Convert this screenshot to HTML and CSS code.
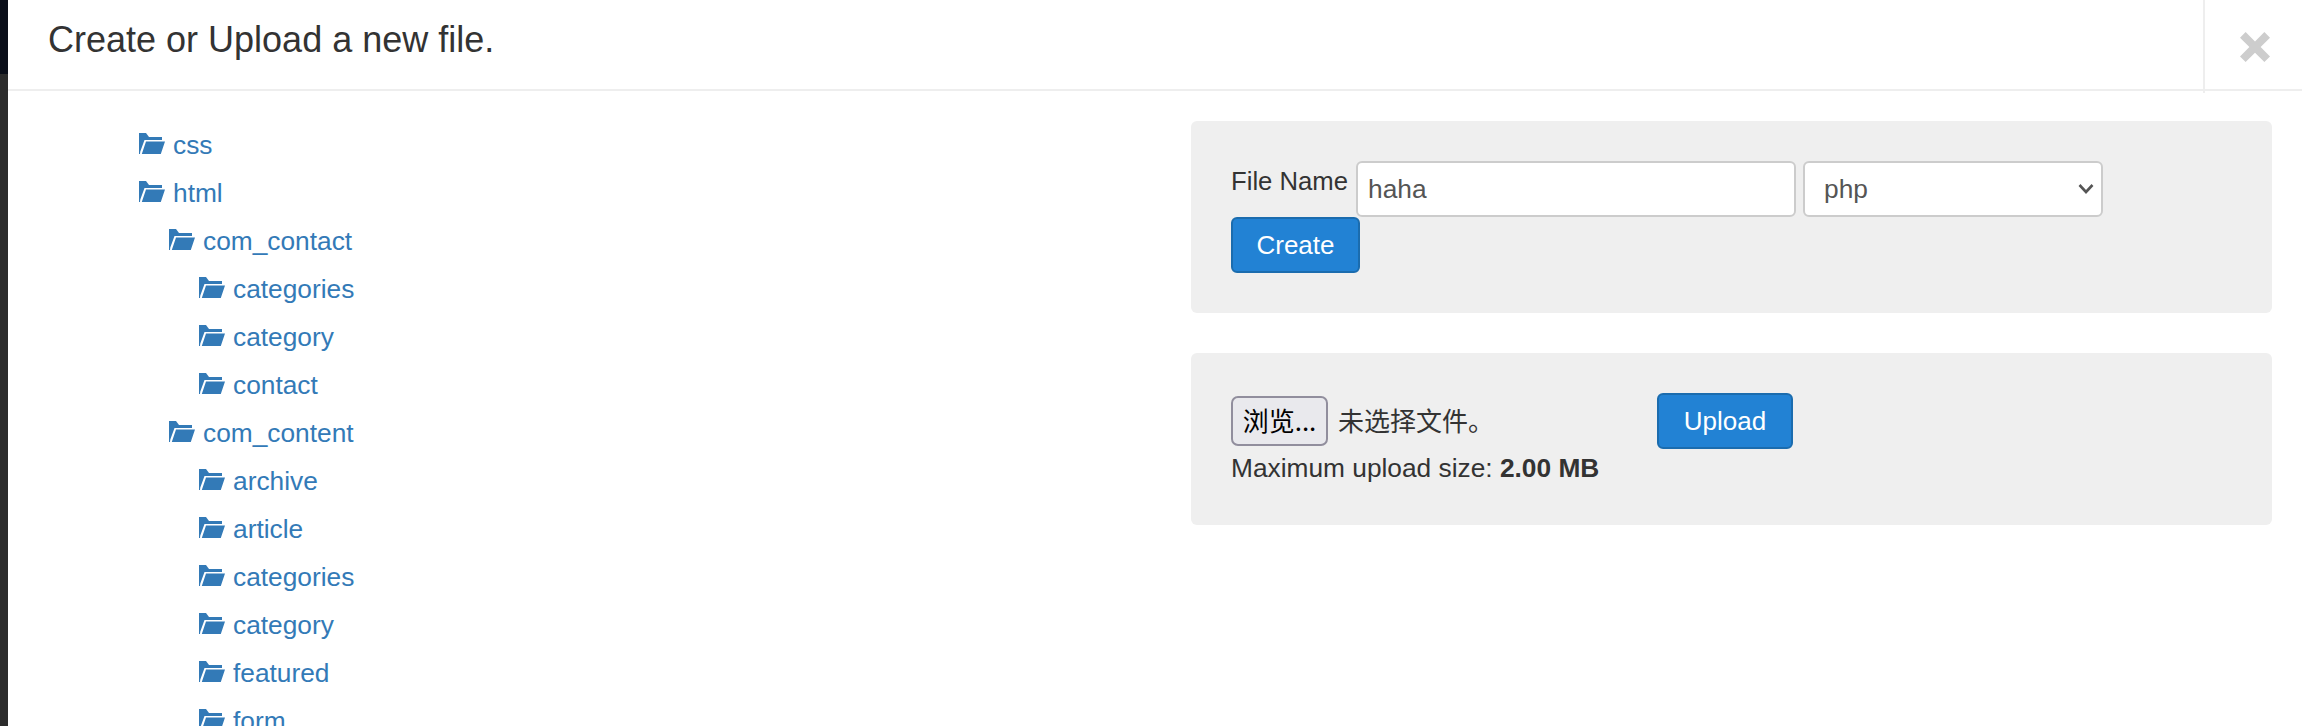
FILE: index.html
```html
<!DOCTYPE html>
<html lang="zh">
<head>
<meta charset="utf-8">
<title>Create or Upload a new file.</title>
<link rel="stylesheet" href="styles.css">
</head>
<body>
<div class="backdrop">
  <div class="strip"><div class="strip-top"></div></div>
  <div class="modal">
    <header class="modal-header">
      <h3 class="modal-title">Create or Upload a new file.</h3>
      <button class="close" type="button" aria-label="Close">
        <svg viewBox="3 3 24 24" width="30" height="30"><path d="M3 7.500 7.500 3 15 10.500 22.500 3 27 7.500 19.500 15 27 22.500 22.500 27 15 19.500 7.500 27 3 22.500 10.500 15Z" fill="#cdcdcd"/></svg>
      </button>
    </header>
    <div class="modal-body">
      <ul class="tree">
        <li><a href="#"><svg class="folder" viewBox="0 0 26 22"><path d="M0 21V0h7l3 4h13v3H5.500L1.300 18.500 1 21Z M2.800 21 7 8.600h19L21.800 21Z" fill="#337ab7"/></svg>css</a></li>
        <li><a href="#"><svg class="folder" viewBox="0 0 26 22"><path d="M0 21V0h7l3 4h13v3H5.500L1.300 18.500 1 21Z M2.800 21 7 8.600h19L21.800 21Z" fill="#337ab7"/></svg>html</a>
          <ul>
            <li><a href="#"><svg class="folder" viewBox="0 0 26 22"><path d="M0 21V0h7l3 4h13v3H5.500L1.300 18.500 1 21Z M2.800 21 7 8.600h19L21.800 21Z" fill="#337ab7"/></svg>com_contact</a>
              <ul>
                <li><a href="#"><svg class="folder" viewBox="0 0 26 22"><path d="M0 21V0h7l3 4h13v3H5.500L1.300 18.500 1 21Z M2.800 21 7 8.600h19L21.800 21Z" fill="#337ab7"/></svg>categories</a></li>
                <li><a href="#"><svg class="folder" viewBox="0 0 26 22"><path d="M0 21V0h7l3 4h13v3H5.500L1.300 18.500 1 21Z M2.800 21 7 8.600h19L21.800 21Z" fill="#337ab7"/></svg>category</a></li>
                <li><a href="#"><svg class="folder" viewBox="0 0 26 22"><path d="M0 21V0h7l3 4h13v3H5.500L1.300 18.500 1 21Z M2.800 21 7 8.600h19L21.800 21Z" fill="#337ab7"/></svg>contact</a></li>
              </ul>
            </li>
            <li><a href="#"><svg class="folder" viewBox="0 0 26 22"><path d="M0 21V0h7l3 4h13v3H5.500L1.300 18.500 1 21Z M2.800 21 7 8.600h19L21.800 21Z" fill="#337ab7"/></svg>com_content</a>
              <ul>
                <li><a href="#"><svg class="folder" viewBox="0 0 26 22"><path d="M0 21V0h7l3 4h13v3H5.500L1.300 18.500 1 21Z M2.800 21 7 8.600h19L21.800 21Z" fill="#337ab7"/></svg>archive</a></li>
                <li><a href="#"><svg class="folder" viewBox="0 0 26 22"><path d="M0 21V0h7l3 4h13v3H5.500L1.300 18.500 1 21Z M2.800 21 7 8.600h19L21.800 21Z" fill="#337ab7"/></svg>article</a></li>
                <li><a href="#"><svg class="folder" viewBox="0 0 26 22"><path d="M0 21V0h7l3 4h13v3H5.500L1.300 18.500 1 21Z M2.800 21 7 8.600h19L21.800 21Z" fill="#337ab7"/></svg>categories</a></li>
                <li><a href="#"><svg class="folder" viewBox="0 0 26 22"><path d="M0 21V0h7l3 4h13v3H5.500L1.300 18.500 1 21Z M2.800 21 7 8.600h19L21.800 21Z" fill="#337ab7"/></svg>category</a></li>
                <li><a href="#"><svg class="folder" viewBox="0 0 26 22"><path d="M0 21V0h7l3 4h13v3H5.500L1.300 18.500 1 21Z M2.800 21 7 8.600h19L21.800 21Z" fill="#337ab7"/></svg>featured</a></li>
                <li><a href="#"><svg class="folder" viewBox="0 0 26 22"><path d="M0 21V0h7l3 4h13v3H5.500L1.300 18.500 1 21Z M2.800 21 7 8.600h19L21.800 21Z" fill="#337ab7"/></svg>form</a></li>
              </ul>
            </li>
          </ul>
        </li>
      </ul>
      <div class="side">
        <form class="well create-form">
          <label class="name-label">File Name</label>
          <input class="control name-input" type="text" value="haha">
          <span class="select-wrap">
            <select class="control type-select"><option>php</option></select>
            <svg class="chevron" viewBox="0 0 16 12" width="16" height="12"><path d="M1.500 2 8 9l6.500-7" fill="none" stroke="#555" stroke-width="2.600"/></svg>
          </span>
          <div class="break"></div>
          <button class="btn btn-create" type="button">Create</button>
        </form>
        <form class="well upload-form">
          <div class="upload-row">
            <span class="file-pick"><button class="browse" type="button">浏览...</button><span class="no-file">未选择文件。</span></span>
            <button class="btn btn-upload" type="button">Upload</button>
          </div>
          <div class="limit">Maximum upload size: <strong>2.00 MB</strong></div>
        </form>
      </div>
    </div>
  </div>
</div>
</body>
</html>
```
FILE: styles.css
```css
* { box-sizing: border-box; }
html, body { margin: 0; padding: 0; height: 726px; overflow: hidden; }
body { font-family: "Liberation Sans", Arial, sans-serif; font-size: 26.300px; line-height: 34px; color: #333; background: #fff; }
.backdrop { display: flex; height: 726px; overflow: hidden; }
.strip { width: 8px; flex: none; background: #2c2c2c; }
.strip-top { height: 74px; background: #0a0e19; }
.modal { flex: 1; display: flex; flex-direction: column; background: #fff; min-width: 0; }
.modal-header { display: flex; justify-content: space-between; height: 91px; flex: none; border-bottom: 2px solid #eee; padding-left: 40px; }
.modal-title { margin: 0; padding-top: 20px; font-size: 36px; font-weight: 400; line-height: 40px; color: #333; }
.close { width: 99px; height: 93px; flex: none; background: none; border: 0; border-left: 2px solid #eee; padding: 0 0 0 2px; display: flex; align-items: center; justify-content: center; }
.modal-body { display: flex; flex: 1; min-height: 0; overflow: hidden; }
.tree, .tree ul { list-style: none; margin: 0; padding: 0; }
.tree { width: 1183px; flex: none; padding: 30px 0 0 131px; }
.tree ul { padding-left: 30px; }
.tree a { display: block; height: 48px; color: #337ab7; text-decoration: none; line-height: 48px; white-space: nowrap; }
.folder { width: 26px; height: 22px; margin-right: 8px; vertical-align: -1px; }
.side { flex: 1; padding-top: 30px; }
.well { width: 1081px; background: #efefef; border-radius: 6px; padding: 40px; }
.create-form { height: 192px; display: flex; flex-wrap: wrap; align-items: flex-start; margin-bottom: 40px; }
.name-label { width: 125px; font-size: 25.700px; line-height: 34px; margin-top: 3px; white-space: nowrap; }
.control { height: 56px; border: 2px solid #ccc; border-radius: 6px; background: #fff; color: #555; font: 26.300px "Liberation Sans", Arial, sans-serif; padding: 0 10px; }
.name-input { width: 440px; margin-right: 7px; }
.select-wrap { position: relative; display: block; height: 56px; }
.type-select { display: block; width: 300px; padding: 0 19px; appearance: none; -webkit-appearance: none; }
.chevron { position: absolute; right: 9px; top: 22px; }
.break { flex-basis: 100%; height: 0; }
.btn { height: 56px; padding: 0; border: 2px solid #1b6cae; border-radius: 6px; background: #2282d4; color: #fff; font: 26px "Liberation Sans", Arial, sans-serif; }
.btn-create { width: 129px; }
.btn-upload { width: 136px; }
.upload-form { height: 172px; }
.upload-row { display: flex; align-items: center; height: 56px; }
.file-pick { width: 426px; display: flex; align-items: center; flex: none; }
.browse { width: 97px; height: 50px; border: 2px solid #918e9d; border-radius: 7px; background: #e9e9ed; color: #000; padding: 0 0 4px; font: 26px "Noto Sans CJK SC", sans-serif; }
.no-file { margin-left: 10px; margin-top: -3px; font: 26px "Noto Sans CJK SC", sans-serif; }
.limit { margin-top: 2px; }
```
